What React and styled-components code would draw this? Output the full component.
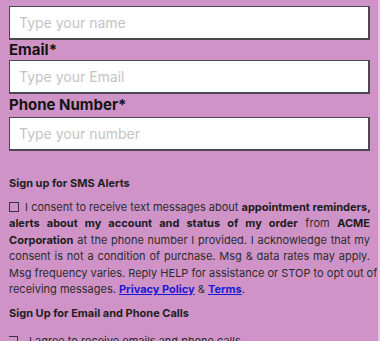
import React from "react";
import styled, { createGlobalStyle } from "styled-components";

const GlobalStyle = createGlobalStyle`
  html, body {
    margin: 0;
    padding: 0;
    background: #ecc3e8;
  }
  body {
    font-family: "Inter", "Liberation Sans", sans-serif;
  }
`;

const Page = styled.div`
  width: 378px;
  height: 341px;
  overflow: hidden;
  background: #cf93c8;
`;

const Form = styled.form`
  display: flex;
  flex-direction: column;
  padding: 0 8px 0 9px;
  margin-top: -21px;
`;

const Label = styled.label`
  display: block;
  font-size: 15px;
  font-weight: 700;
  color: #141414;
  line-height: 20px;
  margin: ${(p) => p.space || "0"};
`;

const Input = styled.input`
  box-sizing: border-box;
  width: 100%;
  height: 34px;
  padding: 0 9px;
  border: 1px solid #4d4750;
  border-right-width: 2px;
  border-bottom-width: 2px;
  background: #fff;
  font-family: "Inter", "Liberation Sans", sans-serif;
  font-size: 14px;
  outline: none;

  &::placeholder {
    color: #c4c4c4;
  }
`;

const SectionTitle = styled.h4`
  margin: ${(p) => p.top || "24px"} 0 8px;
  font-size: 11px;
  font-weight: 700;
  color: #1f1f1f;
  line-height: 16px;
`;

const Consent = styled.div`
  font-size: 11px;
  line-height: 16.4px;
  color: #2b2b2b;
`;

const Line = styled.span`
  display: block;
  text-align: justify;
  text-align-last: ${(p) => (p.last ? "left" : "justify")};
  white-space: nowrap;
`;

const Box = styled.span`
  display: inline-block;
  box-sizing: border-box;
  width: 10px;
  height: 10px;
  border: 1.3px solid #3b3340;
  vertical-align: -1px;
  margin-right: 3px;
`;

const OpenBox = styled(Box)`
  border-left: none;
  width: 9px;
  margin-right: 11px;
`;

const B = styled.b`
  font-weight: 700;
  color: #1c1c1c;
`;

const A = styled.a`
  color: #1a1ad6;
  font-weight: 700;
  text-decoration: underline;
`;

const AgreeRow = styled.div`
  display: flex;
  align-items: center;
  font-size: 11px;
  color: #2b2b2b;
  line-height: 16px;
  margin-top: 4px;
`;

export default function App() {
  return (
    <Page>
      <GlobalStyle />
      <Form>
        <Label space="0 0 7px">Full Name*</Label>
        <Input placeholder="Type your name" />
        <Label>Email*</Label>
        <Input placeholder="Type your Email" />
        <Label space="1px 0 2px">Phone Number*</Label>
        <Input placeholder="Type your number" />

        <SectionTitle>Sign up for SMS Alerts</SectionTitle>
        <Consent>
          <Line>
            <Box /> I consent to receive text messages about <B>appointment reminders,</B>
          </Line>
          <Line>
            <B>alerts about my account and status of my order</B> from <B>ACME</B>
          </Line>
          <Line>
            <B>Corporation</B> at the phone number I provided. I acknowledge that my
          </Line>
          <Line>consent is not a condition of purchase. Msg &amp; data rates may apply.</Line>
          <Line>Msg frequency varies. Reply HELP for assistance or STOP to opt out of</Line>
          <Line last>
            receiving messages. <A href="#">Privacy Policy</A> &amp; <A href="#">Terms</A>.
          </Line>
        </Consent>

        <SectionTitle top="8px">Sign Up for Email and Phone Calls</SectionTitle>
        <AgreeRow>
          <OpenBox />
          I agree to receive emails and phone calls.
        </AgreeRow>
      </Form>
    </Page>
  );
}
